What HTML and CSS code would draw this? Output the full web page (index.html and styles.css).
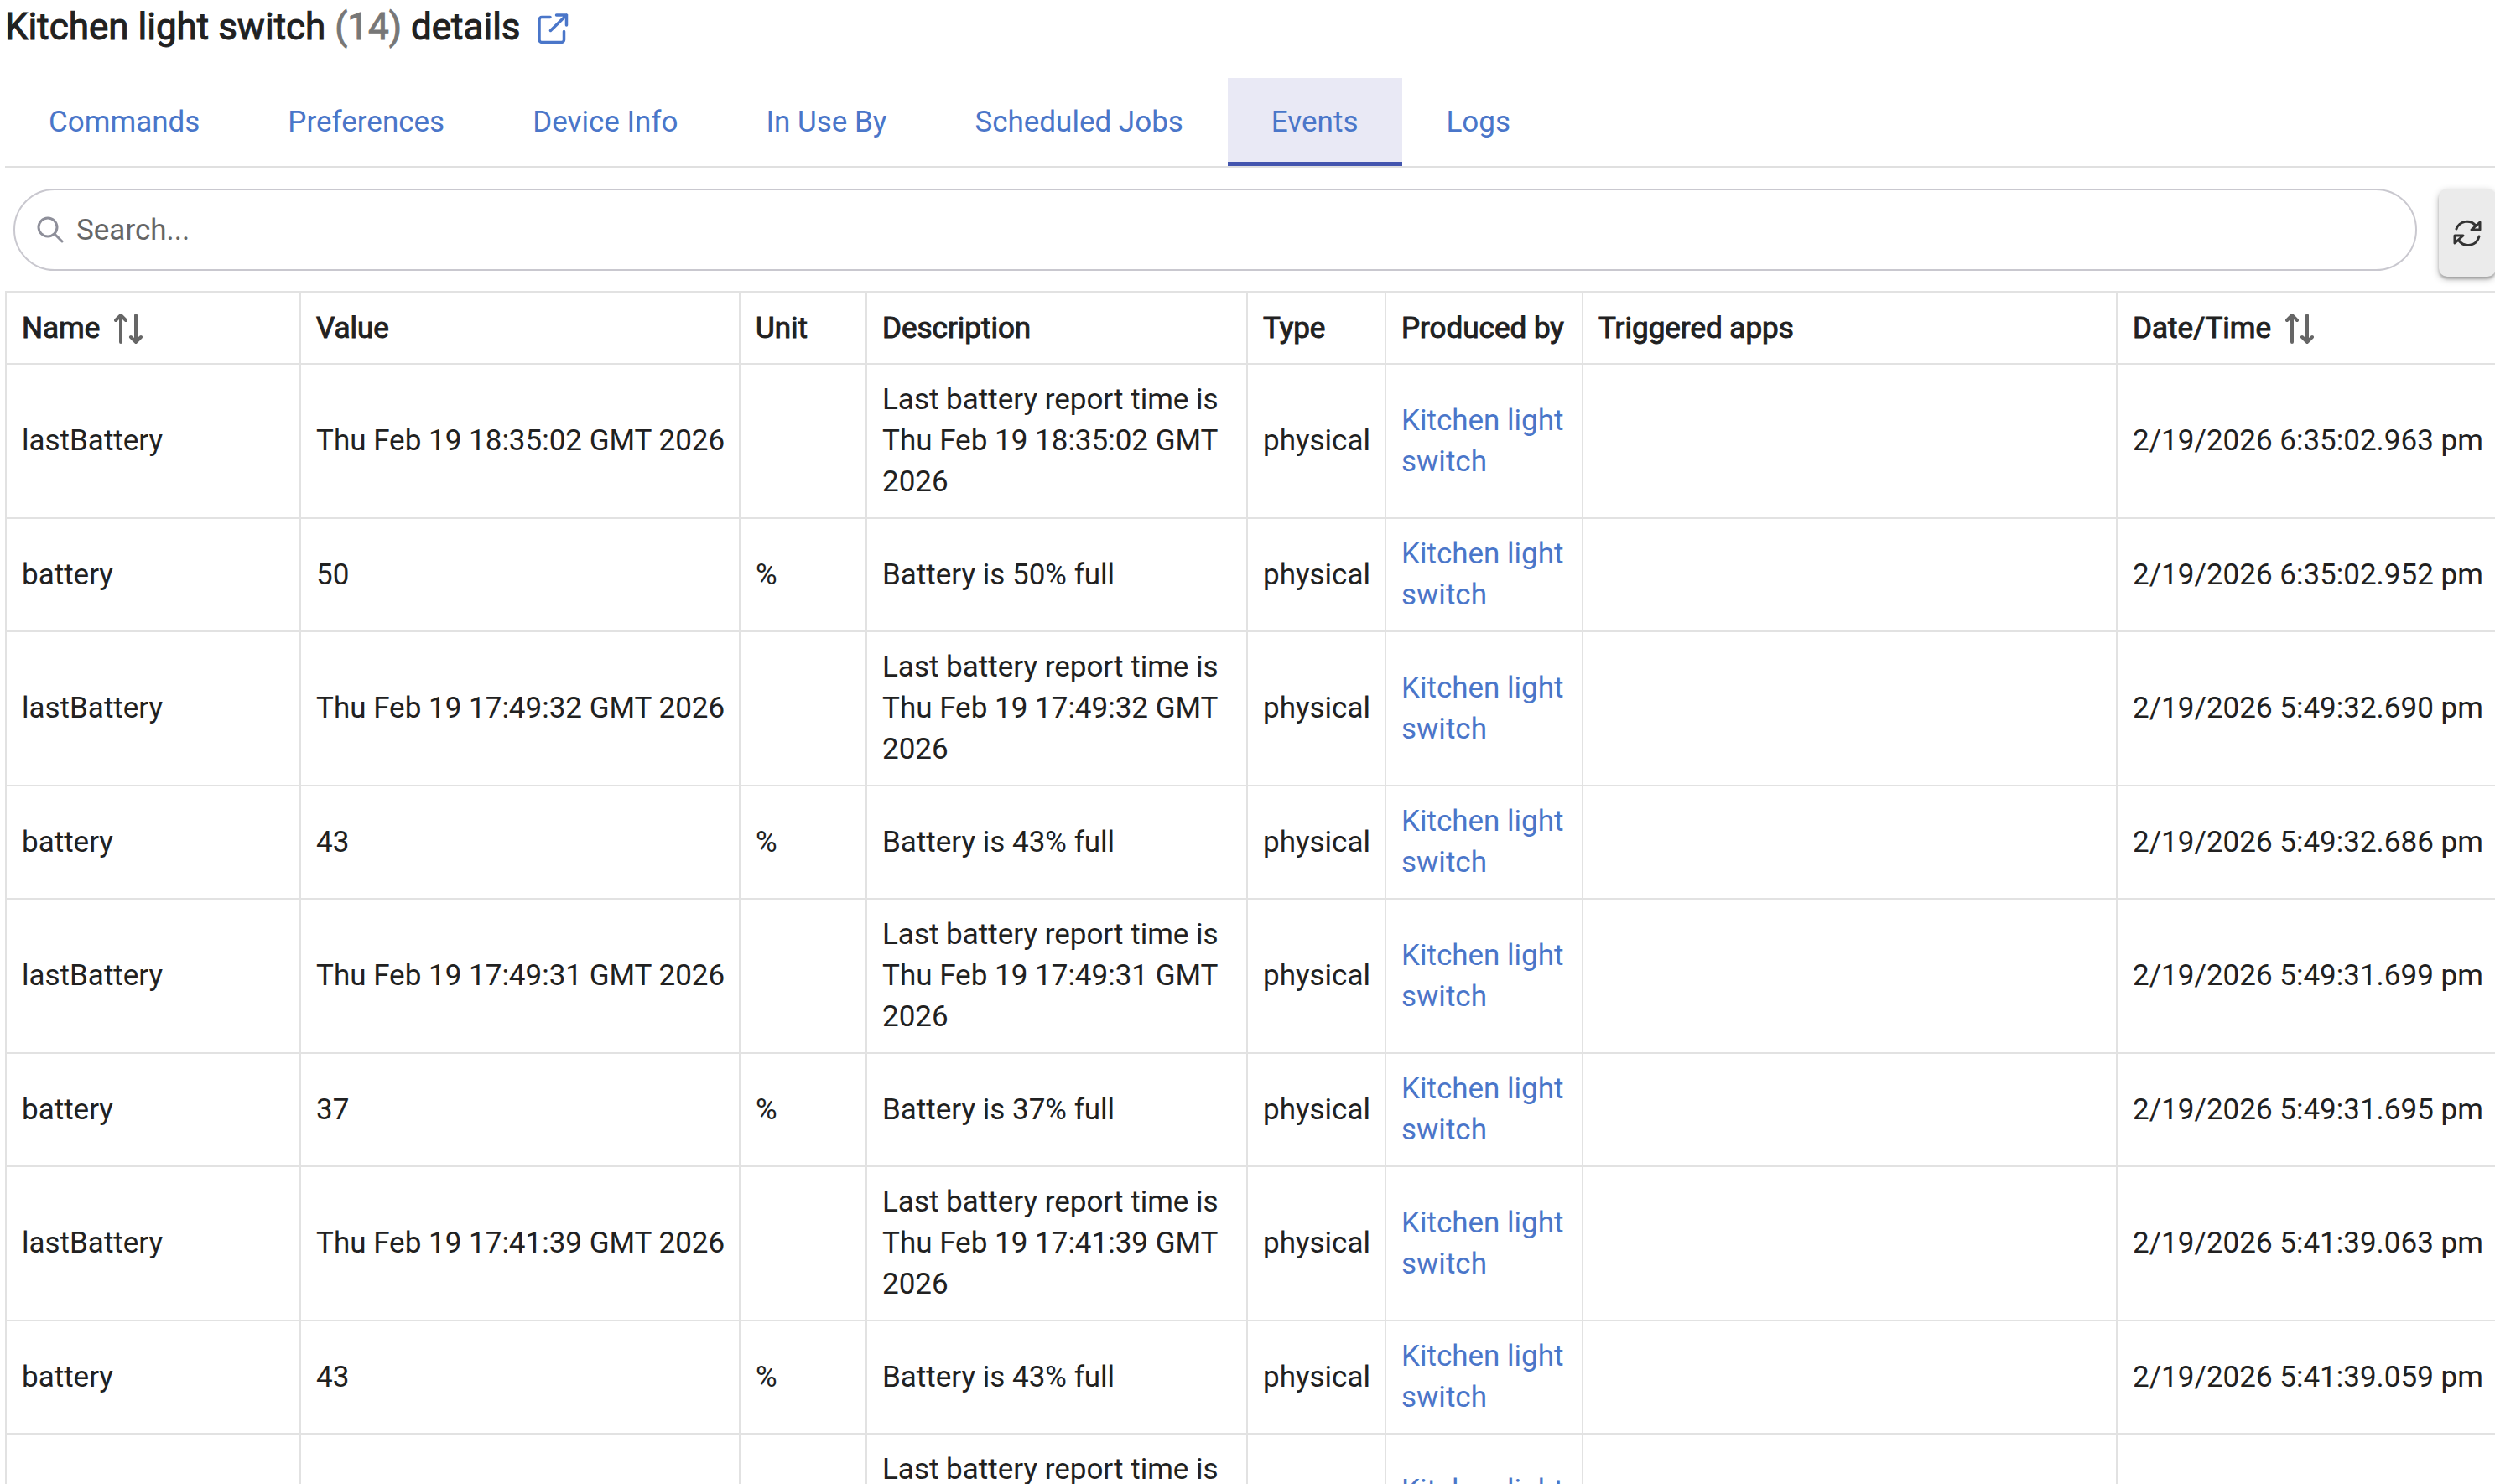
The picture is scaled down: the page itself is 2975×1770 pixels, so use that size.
FILE: index.html
```html
<!DOCTYPE html>
<html lang="en">
<head>
<meta charset="utf-8">
<title>Kitchen light switch details</title>
<link rel="stylesheet" href="styles.css">
</head>
<body>
<main class="page">
  <h1 class="title">
    <span>Kitchen light switch <span class="device-id">(14)</span> details</span>
    <a href="#" class="open-link" aria-label="Open in new window">
      <svg class="icon-open" viewBox="0 0 37 37" fill="none" stroke="currentColor" stroke-width="3.5" stroke-linecap="round" stroke-linejoin="round"><path d="M15 4.500H5a3 3 0 0 0-3 3v24a3 3 0 0 0 3 3h23.500a3 3 0 0 0 3-3V21.500M22.500 2H34.500V14M34.500 2L15.500 20.500"/></svg>
    </a>
  </h1>
  <nav class="tabs">
    <a href="#" class="tab">Commands</a>
    <a href="#" class="tab">Preferences</a>
    <a href="#" class="tab">Device Info</a>
    <a href="#" class="tab">In Use By</a>
    <a href="#" class="tab">Scheduled Jobs</a>
    <a href="#" class="tab active" aria-current="page">Events</a>
    <a href="#" class="tab">Logs</a>
  </nav>
  <div class="toolbar">
    <label class="search">
      <svg class="icon-search" viewBox="0 0 32 32" fill="none" stroke="currentColor" stroke-width="3" stroke-linecap="round"><circle cx="13" cy="13" r="11"/><path d="M21 21L30 30"/></svg>
      <input type="text" class="search-input" placeholder="Search..." aria-label="Search events">
    </label>
    <button type="button" class="refresh" aria-label="Refresh">
      <svg class="icon-refresh" viewBox="0 0 34 32" fill="none" stroke="currentColor" stroke-width="3" stroke-linecap="round" stroke-linejoin="round"><path d="M4 11A13.500 13.500 0 0 1 27 7M31 20A13.500 13.500 0 0 1 7 25M32 3V12H22ZM2 28V19H12Z"/></svg>
    </button>
  </div>
  <table class="events">
    <colgroup><col class="c-name"><col class="c-value"><col class="c-unit"><col class="c-desc"><col class="c-type"><col class="c-by"><col class="c-apps"><col class="c-date"></colgroup>
    <thead>
      <tr>
        <th><span class="sortable">Name <svg class="icon-sort" viewBox="0 0 34 36" fill="none" stroke="currentColor" stroke-width="4" stroke-linecap="round"><path d="M8 2V34M2 8L8 2L14 8M26 2V34M20 28L26 34L32 28"/></svg></span></th>
        <th>Value</th><th>Unit</th><th>Description</th><th>Type</th><th>Produced by</th><th>Triggered apps</th>
        <th><span class="sortable">Date/Time <svg class="icon-sort" viewBox="0 0 34 36" fill="none" stroke="currentColor" stroke-width="4" stroke-linecap="round"><path d="M8 2V34M2 8L8 2L14 8M26 2V34M20 28L26 34L32 28"/></svg></span></th>
      </tr>
    </thead>
    <tbody>
      <tr><td>lastBattery</td><td>Thu Feb 19 18:35:02 GMT 2026</td><td></td><td class="wrap">Last battery report time is Thu Feb 19 18:35:02 GMT 2026</td><td>physical</td><td class="wrap"><a href="#">Kitchen light switch</a></td><td></td><td>2/19/2026 6:35:02.963 pm</td></tr>
      <tr><td>battery</td><td>50</td><td>%</td><td class="wrap">Battery is 50% full</td><td>physical</td><td class="wrap"><a href="#">Kitchen light switch</a></td><td></td><td>2/19/2026 6:35:02.952 pm</td></tr>
      <tr><td>lastBattery</td><td>Thu Feb 19 17:49:32 GMT 2026</td><td></td><td class="wrap">Last battery report time is Thu Feb 19 17:49:32 GMT 2026</td><td>physical</td><td class="wrap"><a href="#">Kitchen light switch</a></td><td></td><td>2/19/2026 5:49:32.690 pm</td></tr>
      <tr><td>battery</td><td>43</td><td>%</td><td class="wrap">Battery is 43% full</td><td>physical</td><td class="wrap"><a href="#">Kitchen light switch</a></td><td></td><td>2/19/2026 5:49:32.686 pm</td></tr>
      <tr><td>lastBattery</td><td>Thu Feb 19 17:49:31 GMT 2026</td><td></td><td class="wrap">Last battery report time is Thu Feb 19 17:49:31 GMT 2026</td><td>physical</td><td class="wrap"><a href="#">Kitchen light switch</a></td><td></td><td>2/19/2026 5:49:31.699 pm</td></tr>
      <tr><td>battery</td><td>37</td><td>%</td><td class="wrap">Battery is 37% full</td><td>physical</td><td class="wrap"><a href="#">Kitchen light switch</a></td><td></td><td>2/19/2026 5:49:31.695 pm</td></tr>
      <tr><td>lastBattery</td><td>Thu Feb 19 17:41:39 GMT 2026</td><td></td><td class="wrap">Last battery report time is Thu Feb 19 17:41:39 GMT 2026</td><td>physical</td><td class="wrap"><a href="#">Kitchen light switch</a></td><td></td><td>2/19/2026 5:41:39.063 pm</td></tr>
      <tr><td>battery</td><td>43</td><td>%</td><td class="wrap">Battery is 43% full</td><td>physical</td><td class="wrap"><a href="#">Kitchen light switch</a></td><td></td><td>2/19/2026 5:41:39.059 pm</td></tr>
      <tr class="tall"><td></td><td></td><td></td><td class="wrap top">Last battery report time is</td><td></td><td class="wrap"><a href="#">Kitchen light switch</a></td><td></td><td></td></tr>
    </tbody>
  </table>
</main>
</body>
</html>
```
FILE: styles.css
```css
* { box-sizing: border-box; }
html { height: 100%; overflow: hidden; }
body {
  margin: 0;
  height: 100%;
  overflow: hidden;
  background: #fff;
  color: #212121;
  font-family: Roboto, "Liberation Sans", sans-serif;
  font-size: 35px;
  line-height: 49px;
}
a { color: #4a76c9; text-decoration: none; }
.page { margin-left: 6px; margin-right: -4px; }
.title {
  display: flex;
  align-items: center;
  gap: 20px;
  margin: 0;
  height: 64px;
  font-size: 44px;
  line-height: 64px;
  font-weight: 400;
  -webkit-text-stroke: 1px currentColor;
}
.device-id { color: #777; }
.open-link { display: flex; }
.icon-open { width: 37px; height: 37px; margin-top: 4px; }
.tabs {
  display: flex;
  margin-top: 29px;
  border-bottom: 2px solid #e0e0e0;
}
.tab {
  padding: 28px 53px 23px 52px;
  border-bottom: 5px solid transparent;
}
.tab.active {
  background: #e9e9f5;
  border-bottom-color: #4355ae;
}
.toolbar {
  display: flex;
  align-items: flex-start;
  gap: 26px;
  padding: 25px 3px 17px 10px;
}
.search {
  flex: 1;
  display: flex;
  align-items: center;
  gap: 15px;
  height: 98px;
  padding: 0 26px;
  border: 2px solid #c9c8cf;
  border-radius: 49px;
}
.icon-search { width: 32px; height: 32px; color: #8e8f9a; }
.search-input {
  flex: 1;
  padding: 0;
  border: 0;
  outline: 0;
  background: none;
  font: inherit;
  color: inherit;
}
.search-input::placeholder { color: #666; opacity: 1; }
.refresh {
  display: flex;
  align-items: center;
  justify-content: center;
  width: 68px;
  height: 105px;
  padding: 0;
  border: 0;
  border-radius: 10px;
  background: #ebebeb;
  color: #333;
  box-shadow: 0 3px 3px rgba(0, 0, 0, .2), 0 3px 8px rgba(0, 0, 0, .25);
}
.icon-refresh { width: 34px; height: 32px; }
.events {
  width: 100%;
  table-layout: fixed;
  border-collapse: collapse;
}
.events th, .events td {
  padding: 17px 18px 18px;
  border: 2px solid #e2e2e2;
  text-align: left;
  vertical-align: middle;
  white-space: nowrap;
}
.events th {
  padding: 18px 18px 17px;
  font-weight: 400;
  -webkit-text-stroke: 1px currentColor;
}
.events .wrap { white-space: normal; }
.events .top { vertical-align: top; }
.tall { height: 184px; }
.sortable { display: flex; align-items: center; gap: 17px; }
.icon-sort { width: 34px; height: 36px; color: #666; }
.c-name { width: 351px; }
.c-value { width: 524px; }
.c-unit { width: 151px; }
.c-desc { width: 454px; }
.c-type { width: 165px; }
.c-by { width: 235px; }
.c-apps { width: 637px; }
```
